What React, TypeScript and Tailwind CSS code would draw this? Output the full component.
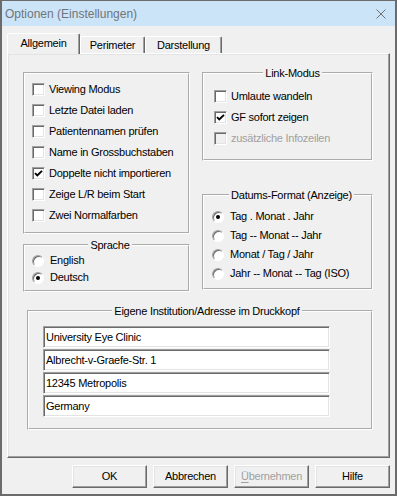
import type { ReactNode } from 'react';

const sunken =
  'border border-t-[#a0a0a0] border-l-[#a0a0a0] border-r-white border-b-white shadow-[inset_1px_1px_0_#696969,inset_-1px_-1px_0_#e3e3e3]';
const raised =
  'border border-t-white border-l-white border-r-[#696969] border-b-[#696969] shadow-[inset_-1px_-1px_0_#a0a0a0,inset_1px_1px_0_#e3e3e3]';
const etched = 'border-2 border-white [--tw-border-style:groove] [border-style:groove]';

function Check({ label, checked, disabled }: { label: string; checked?: boolean; disabled?: boolean }) {
  return (
    <div className="h-[21px] flex items-center gap-[4px]">
      <div className={`w-[13px] h-[13px] shrink-0 flex items-center justify-center ${sunken} ${disabled ? 'bg-[#f0f0f0]' : 'bg-white'}`}>
        {checked && (
          <svg width="9" height="9" viewBox="0 0 9 9">
            <path d="M1 4.2 L3.3 6.5 L8 1.8" fill="none" stroke="#000" strokeWidth="1.9" />
          </svg>
        )}
      </div>
      <span className={disabled ? 'text-[#a0a0a0]' : ''}>{label}</span>
    </div>
  );
}

function Radio({ label, checked, h }: { label: string; checked?: boolean; h: string }) {
  return (
    <div className={`${h} flex items-center gap-[6px]`}>
      <div className="w-[12px] h-[12px] shrink-0 rounded-full bg-white border border-t-[#a0a0a0] border-l-[#a0a0a0] border-r-white border-b-white shadow-[inset_1px_1px_0_#696969] flex items-center justify-center">
        {checked && <div className="w-[4px] h-[4px] rounded-full bg-black" />}
      </div>
      <span>{label}</span>
    </div>
  );
}

function Group({ title, className, children }: { title: string; className: string; children: ReactNode }) {
  return (
    <fieldset className={`${etched} min-w-0 ${className}`}>
      <legend className="mx-auto px-[2px] h-[14px] leading-[14px]">{title}</legend>
      {children}
    </fieldset>
  );
}

function Tab({ label, selected, w }: { label: string; selected?: boolean; w: string }) {
  return (
    <div
      className={`${w} flex items-center justify-center rounded-t-[2px] bg-[#f0f0f0] border-t border-l border-r border-t-white border-l-white border-r-[#696969] shadow-[inset_-1px_0_0_#a0a0a0] ${
        selected ? 'relative z-10 h-[21px] pb-[2px]' : 'h-[17px] mb-px'
      }`}
    >
      {label}
    </div>
  );
}

function Field({ value }: { value: string }) {
  return (
    <div className={`w-[287px] h-[22px] bg-white pl-[2px] flex items-center ${sunken}`}>{value}</div>
  );
}

export default function App() {
  return (
    <div className="w-[397px] h-[496px] flex flex-col bg-[#f0f0f0] border-x-2 border-b-2 border-t border-[#6b6b6b] text-[11px] tracking-[-0.25px] text-black font-['Liberation_Sans',Arial,sans-serif]">
      {/* Title bar */}
      <div className="h-[25px] shrink-0 bg-[#cce4f7] flex items-center justify-between pl-[3px] pr-[9px]">
        <span className="text-[12px] tracking-normal text-[#6f757b]">Optionen (Einstellungen)</span>
        <svg width="10" height="10" viewBox="0 0 10 10">
          <path d="M0.5 0.5 L9.5 9.5 M9.5 0.5 L0.5 9.5" stroke="#707070" strokeWidth="1" />
        </svg>
      </div>

      <div className="flex-1 flex flex-col px-[5px] pt-[7px]">
        {/* Tabs */}
        <div className="flex items-end h-[21px]">
          <Tab label="Allgemein" selected w="w-[73px]" />
          <Tab label="Perimeter" w="w-[65px]" />
          <Tab label="Darstellung" w="w-[77px]" />
        </div>

        {/* Tab page */}
        <div className={`-mt-px h-[405px] flex flex-col ${raised}`}>
          <div className="grid grid-cols-[167px_171px] gap-x-[12px] pl-[15px] pt-[12px]">
            <div className="mt-[6px] flex flex-col gap-[4px]">
              <div className={`${etched} h-[162px] pt-[5px] pl-[7px] flex flex-col`}>
                <Check label="Viewing Modus" />
                <Check label="Letzte Datei laden" />
                <Check label="Patientennamen prüfen" />
                <Check label="Name in Grossbuchstaben" />
                <Check label="Doppelte nicht importieren" checked />
                <Check label="Zeige L/R beim Start" />
                <Check label="Zwei Normalfarben" />
              </div>
              <Group title="Sprache" className="h-[54px] pl-[7px]">
                <Radio label="English" h="h-[17px]" />
                <Radio label="Deutsch" h="h-[17px]" checked />
              </Group>
            </div>

            <div className="flex flex-col gap-[27px]">
              <Group title="Link-Modus" className="h-[95px] pl-[10px] pt-[6px]">
                <Check label="Umlaute wandeln" />
                <Check label="GF sofort zeigen" checked />
                <Check label="zusätzliche Infozeilen" disabled />
              </Group>
              <Group title="Datums-Format (Anzeige)" className="h-[102px] pl-[8px] pt-[5px]">
                <Radio label="Tag . Monat . Jahr" h="h-[19px]" checked />
                <Radio label="Tag -- Monat -- Jahr" h="h-[19px]" />
                <Radio label="Monat / Tag / Jahr" h="h-[19px]" />
                <Radio label="Jahr -- Monat -- Tag  (ISO)" h="h-[19px]" />
              </Group>
            </div>
          </div>

          <Group title="Eigene Institution/Adresse im Druckkopf" className="ml-[19px] mt-[12px] w-[346px] h-[126px] pl-[14px] pt-[8px]">
            <div className="flex flex-col gap-px">
              <Field value="University Eye Clinic" />
              <Field value="Albrecht-v-Graefe-Str. 1" />
              <Field value="12345 Metropolis" />
              <Field value="Germany" />
            </div>
          </Group>
        </div>

        {/* Buttons */}
        <div className="flex justify-end gap-[6px] mt-[7px]">
          <button className={`w-[75px] h-[23px] bg-[#f0f0f0] ${raised}`}>OK</button>
          <button className={`w-[75px] h-[23px] bg-[#f0f0f0] ${raised}`}>Abbrechen</button>
          <button className={`w-[75px] h-[23px] bg-[#f0f0f0] text-[#a0a0a0] ${raised}`}>
            <span className="underline underline-offset-2">Ü</span>bernehmen
          </button>
          <button className={`w-[75px] h-[23px] bg-[#f0f0f0] ${raised}`}>Hilfe</button>
        </div>
      </div>
    </div>
  );
}
